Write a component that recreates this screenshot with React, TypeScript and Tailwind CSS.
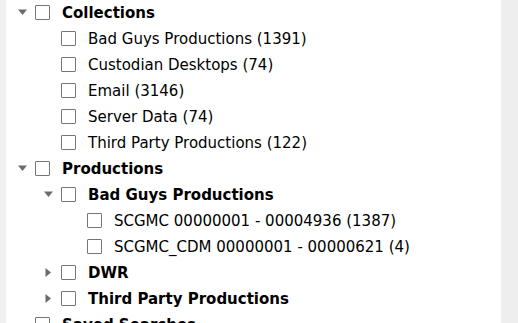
import React from "react";

type Node = {
  label: string;
  level: 0 | 1 | 2;
  bold?: boolean;
  arrow?: "open" | "closed";
};

const rows: Node[] = [
  { label: "Collections", level: 0, bold: true, arrow: "open" },
  { label: "Bad Guys Productions (1391)", level: 1 },
  { label: "Custodian Desktops (74)", level: 1 },
  { label: "Email (3146)", level: 1 },
  { label: "Server Data (74)", level: 1 },
  { label: "Third Party Productions (122)", level: 1 },
  { label: "Productions", level: 0, bold: true, arrow: "open" },
  { label: "Bad Guys Productions", level: 1, bold: true, arrow: "open" },
  { label: "SCGMC 00000001 - 00004936 (1387)", level: 2 },
  { label: "SCGMC_CDM 00000001 - 00000621 (4)", level: 2 },
  { label: "DWR", level: 1, bold: true, arrow: "closed" },
  { label: "Third Party Productions", level: 1, bold: true, arrow: "closed" },
  { label: "Saved Searches", level: 0, bold: true },
];

const indent = {
  0: "pl-[7px]",
  1: "pl-[33px]",
  2: "pl-[59px]",
};

function Arrow({ kind }: { kind?: "open" | "closed" }) {
  return (
    <span className="flex h-[18px] w-[18px] shrink-0 items-center justify-center">
      {kind === "open" ? (
        <svg width="9" height="6" viewBox="0 0 9 6">
          <path d="M0 0.5 H9 L4.5 6 Z" fill="#6b6b6b" />
        </svg>
      ) : kind === "closed" ? (
        <svg width="6" height="9" viewBox="0 0 6 9">
          <path d="M0.5 0 V9 L6 4.5 Z" fill="#6b6b6b" />
        </svg>
      ) : null}
    </span>
  );
}

function TreeRow({ node }: { node: Node }) {
  return (
    <div className={`flex h-[26px] items-center ${indent[node.level]}`}>
      <Arrow kind={node.arrow} />
      <span className="ml-[4px] h-[15px] w-[15px] shrink-0 rounded-[1px] border border-[#767676] bg-white" />
      <span
        className={`ml-[12px] whitespace-nowrap pt-[3px] text-[15px] leading-none text-black ${
          node.bold ? "font-bold" : ""
        }`}
      >
        {node.label}
      </span>
    </div>
  );
}

export default function App() {
  return (
    <div className="flex h-[323px] w-[518px] overflow-hidden bg-white font-['DejaVu_Sans',Verdana,sans-serif]">
      <div className="w-[6px] shrink-0 bg-[#f0f0f0]" />
      <div className="-mt-px flex-1">
        {rows.map((node, index) => (
          <TreeRow key={`${node.label}-${index}`} node={node} />
        ))}
      </div>
      <div className="w-[17px] shrink-0 bg-[#eeeeee]" />
    </div>
  );
}
